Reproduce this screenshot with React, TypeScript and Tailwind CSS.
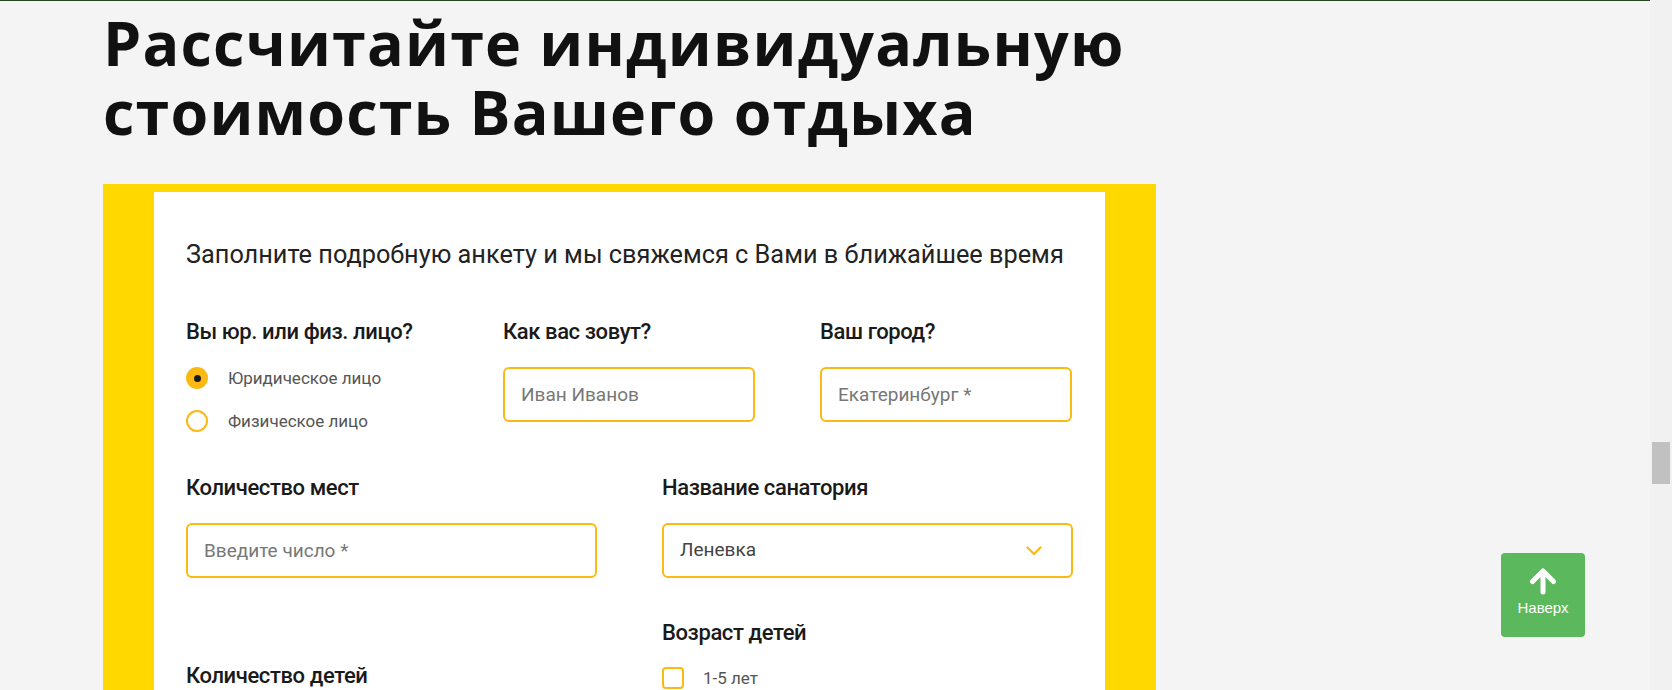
import { useState } from "react";

const AMBER = "border-[#fcb813]";

function Label({ children }: { children: React.ReactNode }) {
  return (
    <div className="text-[22px] leading-[28px] font-medium tracking-[-0.4px] text-[#1a1a1a]">
      {children}
    </div>
  );
}

function Radio({
  checked,
  label,
  onClick,
}: {
  checked: boolean;
  label: string;
  onClick: () => void;
}) {
  return (
    <button type="button" onClick={onClick} className="flex items-center gap-[20px] text-left">
      <span
        className={`flex h-[22px] w-[22px] items-center justify-center rounded-full border-[2.5px] ${AMBER} ${
          checked ? "bg-[#fcb813]" : "bg-white"
        }`}
      >
        {checked && <span className="h-[7px] w-[7px] rounded-full bg-[#1a1a1a]" />}
      </span>
      <span className="text-[17px] leading-[22px] text-[#555]">{label}</span>
    </button>
  );
}

function TextInput({ placeholder }: { placeholder: string }) {
  return (
    <input
      placeholder={placeholder}
      className={`h-[55px] w-full rounded-[6px] border-2 ${AMBER} bg-white px-[16px] text-[19px] text-[#333] outline-none placeholder:text-[#777]`}
    />
  );
}

export default function App() {
  const [lico, setLico] = useState<"yur" | "fiz">("yur");
  const [age, setAge] = useState(false);

  return (
    <div
      className="flex h-[690px] w-full overflow-hidden bg-[#f4f4f4]"
      style={{ fontFamily: "Roboto, 'Noto Sans', sans-serif" }}
    >
      <div className="relative flex-1">
        <div className="h-[1px] bg-[#264623]" />
        <div className="pl-[103px]">
          {/* Заголовок */}
          <h1
            className="mt-[7px] text-[61px] font-bold leading-[69px] tracking-[1.2px] text-[#111]"
            style={{ fontFamily: "'Open Sans', sans-serif" }}
          >
            Рассчитайте индивидуальную
            <br />
            стоимость Вашего отдыха
          </h1>

          {/* Форма */}
          <div className="mt-[38px] w-[1053px] bg-[#ffd800] px-[51px] pt-[8px]">
            <div className="h-[600px] bg-white pl-[32px] pr-[32px] pt-[48px]">
              <p className="text-[25.3px] leading-[30px] text-[#222]">
                Заполните подробную анкету и мы свяжемся с Вами в ближайшее время
              </p>

              <div className="mt-[48px] grid grid-cols-[252px_252px_252px] gap-x-[65px]">
                <div>
                  <Label>Вы юр. или физ. лицо?</Label>
                  <div className="mt-[21px] flex flex-col gap-[21px]">
                    <Radio
                      checked={lico === "yur"}
                      label="Юридическое лицо"
                      onClick={() => setLico("yur")}
                    />
                    <Radio
                      checked={lico === "fiz"}
                      label="Физическое лицо"
                      onClick={() => setLico("fiz")}
                    />
                  </div>
                </div>
                <div>
                  <Label>Как вас зовут?</Label>
                  <div className="mt-[21px]">
                    <TextInput placeholder="Иван Иванов" />
                  </div>
                </div>
                <div>
                  <Label>Ваш город?</Label>
                  <div className="mt-[21px]">
                    <TextInput placeholder="Екатеринбург *" />
                  </div>
                </div>
              </div>

              <div className="mt-[42px] grid grid-cols-[411px_411px] gap-x-[65px]">
                <div>
                  <Label>Количество мест</Label>
                  <div className="mt-[21px]">
                    <TextInput placeholder="Введите число *" />
                  </div>
                </div>
                <div>
                  <Label>Название санатория</Label>
                  <div
                    className={`mt-[21px] flex h-[55px] items-center justify-between rounded-[6px] border-2 ${AMBER} bg-white pl-[16px] pr-[29px]`}
                  >
                    <span className="text-[19px] text-[#444]">Леневка</span>
                    <svg width="16" height="10" viewBox="0 0 16 10" fill="none">
                      <path
                        d="M1.5 1.5 8 8l6.5-6.5"
                        stroke="#fcb813"
                        strokeWidth="2.2"
                        strokeLinecap="round"
                        strokeLinejoin="round"
                      />
                    </svg>
                  </div>
                </div>
              </div>

              <div className="mt-[41px] grid grid-cols-[411px_411px] gap-x-[65px]">
                <div className="pt-[43px]">
                  <Label>Количество детей</Label>
                </div>
                <div>
                  <Label>Возраст детей</Label>
                  <button
                    type="button"
                    onClick={() => setAge(!age)}
                    className="mt-[20px] flex items-center gap-[19px]"
                  >
                    <span
                      className={`h-[22px] w-[22px] rounded-[4px] border-2 ${AMBER} ${
                        age ? "bg-[#fcb813]" : "bg-white"
                      }`}
                    />
                    <span className="text-[17px] leading-[22px] text-[#555]">1-5 лет</span>
                  </button>
                </div>
              </div>
            </div>
          </div>
        </div>

        {/* Кнопка наверх */}
        <button
          type="button"
          className="absolute bottom-[53px] right-[65px] flex h-[84px] w-[84px] flex-col items-center rounded-[4px] bg-[#5cb85c] pt-[15px] text-white"
          style={{ fontFamily: "'Liberation Sans', Arial, sans-serif" }}
        >
          <svg width="30" height="27" viewBox="0 0 30 27" fill="none">
            <path
              d="M15 24V4M4.5 13.5 15 3l10.5 10.5"
              stroke="white"
              strokeWidth="5"
              strokeLinecap="round"
              strokeLinejoin="round"
            />
          </svg>
          <span className="mt-[4px] text-[15px] leading-[18px]">Наверх</span>
        </button>
      </div>

      {/* Полоса прокрутки */}
      <div className="w-[22px] bg-[#f1f1f1] pt-[442px]">
        <div className="mx-auto h-[42px] w-[18px] bg-[#c1c1c1]" />
      </div>
    </div>
  );
}
